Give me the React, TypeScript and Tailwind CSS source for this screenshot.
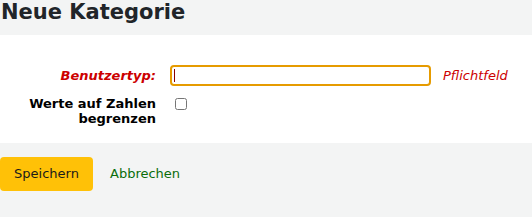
import React from 'react';

export default function App() {
  const font = { fontFamily: '"DejaVu Sans", sans-serif' };
  return (
    <div className="h-[217px] w-[532px] bg-[#f3f4f4] text-[#000]" style={font}>
      <h1 className="h-[35px] pl-[1px] text-[21px] font-bold leading-[25px] text-[#212529]">
        Neue Kategorie
      </h1>

      {/* Formular */}
      <div className="bg-white pt-[30px] pb-[17px]">
        <div className="flex items-center">
          <label className="w-[156px] text-right text-[13px] font-bold italic text-[#cc0000]">
            Benutzertyp:
          </label>
          <div className="relative ml-[14px]">
            <input className="block h-[21px] w-[261px] rounded-[4px] border-2 border-[#e69b00] px-1 text-[13px] outline-none caret-transparent" />
            <span className="absolute left-[4px] top-[4px] h-[13px] w-[1px] bg-[#8b0000]" />
          </div>
          <span className="ml-[12px] text-[13px] italic text-[#cc0000]">Pflichtfeld</span>
        </div>
        <div className="mt-[10px] flex items-start">
          <label className="w-[156px] text-right text-[13px] font-bold leading-[15px]">
            Werte auf Zahlen
            <br />
            begrenzen
          </label>
          <input type="checkbox" className="ml-[19px] mt-[2px] h-[12px] w-[12px]" />
        </div>
      </div>

      <div className="flex items-center pt-[14px]">
        <button className="h-[34px] w-[93px] rounded-[4px] bg-[#ffc107] text-[13px] text-[#1a1a1a]">
          Speichern
        </button>
        <a className="ml-[17px] text-[13px] text-[#0a6d0a]">Abbrechen</a>
      </div>
    </div>
  );
}
